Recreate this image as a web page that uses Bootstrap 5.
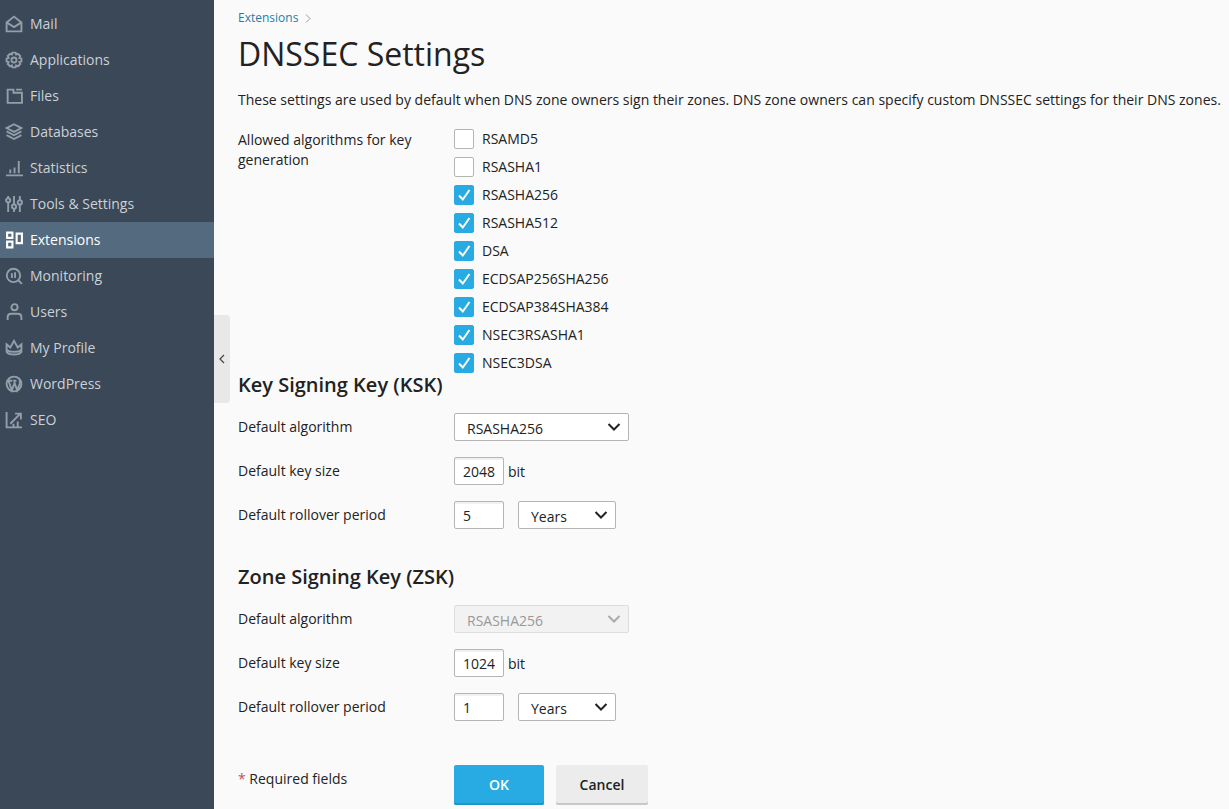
<!DOCTYPE html>
<html lang="en">
<head>
<meta charset="utf-8">
<title>DNSSEC Settings</title>
<link href="https://cdn.jsdelivr.net/npm/bootstrap@5.3.0/dist/css/bootstrap.min.css" rel="stylesheet">
<style>
html,body{height:100%;}
body{font-family:"Open Sans",sans-serif;font-size:14px;line-height:20px;color:#222;background:#fafafa;overflow:hidden;}
.shell{height:809px;}
.side{width:214px;flex:none;background:#3a4858;padding-top:6px;}
.side-link{height:36px;color:#ccd1d7;font-size:14px;padding-left:5px;gap:7px;text-decoration:none;}
.side-link svg{width:18px;height:18px;flex:none;fill:none;stroke:#949ea9;stroke-width:1.8;}
.side-link.current{background:#536a7f;color:#fff;}
.side-link.current svg{stroke:#fff;stroke-width:2;}
.collapse-tab{position:absolute;left:214px;top:315px;width:16px;height:88px;background:#e8e8e8;border-radius:0 4px 4px 0;}
.collapse-tab svg{width:6px;height:10px;fill:none;stroke:#444;stroke-width:1.2;}
.main{padding:7px 0 0 24px;min-width:0;position:relative;}
.crumb{font-size:12px;line-height:18px;color:#1f7ea6;gap:7px;text-decoration:none;}
.crumb svg{width:6px;height:9px;fill:none;stroke:#999;stroke-width:1;}
.page-head{font-size:32px;line-height:40px;font-weight:400;color:#222;margin:7px 0 0;}
.intro{margin:16px 0 0;line-height:20px;height:20px;white-space:nowrap;letter-spacing:.007px;}
.lbl{width:216px;flex:none;}
.algos{margin-top:15px;}
.algos .lbl{width:190px;margin-right:26px;padding-top:5px;}
.chk{height:28px;gap:8px;margin:0;}
.chk input.form-check-input{margin:0;width:20px;height:20px;border:1px solid #b5b5b5;border-radius:2px;background-color:#fff;flex:none;float:none;}
.chk input.form-check-input:checked{background-color:#28abe2;border-color:#28abe2;
background-size:20px 20px;
background-image:url("data:image/svg+xml,%3csvg xmlns='http://www.w3.org/2000/svg' viewBox='0 0 20 20'%3e%3cpath fill='none' stroke='%23fff' stroke-width='2' d='M5 10.500L8.800 14.500 15.500 5'/%3e%3c/svg%3e");}
.chk label{margin-left:0;}
.sect{font-size:20px;line-height:24px;font-weight:600;color:#222;margin:0;}
.sect-first{margin-top:-4px;}
.sect-next{margin-top:36px;}
.frow{align-items:flex-start;margin-top:16px;}
.frow .lbl{padding-top:4px;}
.fld{height:28px;border:1px solid #b5b5b5;border-radius:2px;font-size:14px;line-height:20px;color:#222;padding:3px 8px 3px 8px;background-color:#fff;box-shadow:inset 0 2px 0 #f1f1f1;}
.fld:focus{box-shadow:none;}
.num{width:50px;}
.sel{padding:5px 30px 1px 12px;background-position:right 6px center;background-size:16px 12px;box-shadow:none;
background-image:url("data:image/svg+xml,%3csvg xmlns='http://www.w3.org/2000/svg' viewBox='0 0 16 12'%3e%3cpath fill='none' stroke='%23222' stroke-width='2' d='M2.500 3l5.500 5.500L13.500 3'/%3e%3c/svg%3e");}
.sel-wide{width:175px;}
.sel-unit{width:98px;margin-left:14px;}
.sel:disabled{background-color:#f2f2f2;color:#999;border-color:#ddd;opacity:1;
background-image:url("data:image/svg+xml,%3csvg xmlns='http://www.w3.org/2000/svg' viewBox='0 0 16 12'%3e%3cpath fill='none' stroke='%23aaa' stroke-width='2' d='M2.500 3l5.500 5.500L13.500 3'/%3e%3c/svg%3e");}
.unit{margin-left:4px;padding-top:5px;}
.star{color:#c0505a;}
.footer-row{margin-top:44px;}
.footer-row .lbl{padding-top:4px;}
.btn-ok,.btn-no{height:40px;font-size:14px;line-height:20px;border:0;border-radius:2px;padding:0;}
.btn-ok{width:90px;background:#28abe2;color:#fff;font-weight:600;box-shadow:inset 0 -2px 0 #1f96c8;}
.btn-no{width:92px;margin-left:12px;background:#ececec;color:#222;font-weight:600;box-shadow:inset 0 -2px 0 #c8c8c8;}
</style>
</head>
<body>
<div class="shell d-flex position-relative">
<nav class="side d-flex flex-column">
<a class="side-link d-flex align-items-center" href="#"><svg viewBox="0 0 17 17"><path d="M1.500 7L8.500 1.500 15.500 7v8.500h-14z"/><path d="M1.500 7l7 4.500 7-4.500"/></svg>Mail</a>
<a class="side-link d-flex align-items-center" href="#"><svg viewBox="0 0 17 17"><path d="M7 1.500h3l.5 1.800 1.800-.7 2.100 2.100-.8 1.800 1.900.6v2.800l-1.900.6.8 1.800-2.100 2.100-1.800-.8-.5 1.900H7l-.5-1.900-1.800.8-2.100-2.100.8-1.800-1.900-.6V7.100L3.400 6.500l-.8-1.800 2.100-2.100 1.800.7z"/><circle cx="8.500" cy="8.500" r="2.400"/></svg>Applications</a>
<a class="side-link d-flex align-items-center" href="#"><svg viewBox="0 0 17 17"><path d="M2.500 2.500V15H16V5.500H8V2.500zM10.500 2.500H16"/></svg>Files</a>
<a class="side-link d-flex align-items-center" href="#"><svg viewBox="0 0 17 17"><path d="M8.500 1.200L15.500 4.800 8.500 8.400 1.500 4.800zM1.500 8l7 3.600 7-3.600M1.500 11.500l7 3.600 7-3.600"/></svg>Databases</a>
<a class="side-link d-flex align-items-center" href="#"><svg viewBox="0 0 17 17"><path d="M1 15.500h16M5 13.500V10M9 13.500V8M13 13.500V2"/></svg>Statistics</a>
<a class="side-link d-flex align-items-center" href="#"><svg viewBox="0 0 17 17"><path d="M3 1v2M3 7v9M8.500 1v8M8.500 13v3M14 1v4M14 9v7"/><circle cx="3" cy="5" r="2"/><circle cx="8.500" cy="11" r="2"/><circle cx="14" cy="7" r="2"/></svg>Tools &amp; Settings</a>
<a class="side-link current d-flex align-items-center" href="#"><svg viewBox="0 0 17 17"><path d="M2 1.500h5v5H2zM2 10h5v5.500H2zM11 2.500h5v9h-5z"/></svg>Extensions</a>
<a class="side-link d-flex align-items-center" href="#"><svg viewBox="0 0 17 17"><circle cx="8" cy="8" r="6.300"/><path d="M12.500 12.500L16 16M6.500 6v4.500M9.500 5v5.500"/></svg>Monitoring</a>
<a class="side-link d-flex align-items-center" href="#"><svg viewBox="0 0 17 17"><circle cx="9" cy="4" r="2.900"/><path d="M2.500 16v-2.500c0-2 1.500-3.300 3.500-3.300h6c2 0 3.500 1.300 3.500 3.300V16"/></svg>Users</a>
<a class="side-link d-flex align-items-center" href="#"><svg viewBox="0 0 17 17"><path d="M1.500 5L5 8 8.500 1.800 12 8l3.500-3v7c-2 3.500-12 3.500-14 0z"/><path d="M1.500 10.500c3 2.200 11 2.200 14 0"/></svg>My Profile</a>
<a class="side-link d-flex align-items-center" href="#"><svg viewBox="0 0 17 17"><circle cx="8.500" cy="8.500" r="7"/><path d="M3.500 6l3 8.500L9 7.500l2.500 7L14 8c.5-1.500-.5-2.500-1-2.500M2.800 5.500h4.200M7.800 5.500h3"/></svg>WordPress</a>
<a class="side-link d-flex align-items-center" href="#"><svg viewBox="0 0 17 17"><path d="M1.500 1v14.500H16M5 12l9-9M9.500 2.500H15V8M8 15v-3M12 15v-5"/></svg>SEO</a>
</nav>
<a class="collapse-tab d-flex align-items-center justify-content-center" href="#" aria-label="Collapse"><svg viewBox="0 0 6 10"><path d="M5 1L1 5l4 4"/></svg></a>
<main class="main flex-grow-1">
<a class="crumb d-inline-flex align-items-center" href="#">Extensions<svg viewBox="0 0 6 9"><path d="M1 .5l4 4-4 4"/></svg></a>
<h1 class="page-head">DNSSEC Settings</h1>
<p class="intro">These settings are used by default when DNS zone owners sign their zones. DNS zone owners can specify custom DNSSEC settings for their DNS zones.</p>
<form>
<div class="algos d-flex">
<div class="lbl">Allowed algorithms for key generation</div>
<div>
<div class="form-check chk d-flex align-items-center p-0"><input class="form-check-input" type="checkbox" id="a1"><label class="form-check-label" for="a1">RSAMD5</label></div>
<div class="form-check chk d-flex align-items-center p-0"><input class="form-check-input" type="checkbox" id="a2"><label class="form-check-label" for="a2">RSASHA1</label></div>
<div class="form-check chk d-flex align-items-center p-0"><input class="form-check-input" type="checkbox" id="a3" checked><label class="form-check-label" for="a3">RSASHA256</label></div>
<div class="form-check chk d-flex align-items-center p-0"><input class="form-check-input" type="checkbox" id="a4" checked><label class="form-check-label" for="a4">RSASHA512</label></div>
<div class="form-check chk d-flex align-items-center p-0"><input class="form-check-input" type="checkbox" id="a5" checked><label class="form-check-label" for="a5">DSA</label></div>
<div class="form-check chk d-flex align-items-center p-0"><input class="form-check-input" type="checkbox" id="a6" checked><label class="form-check-label" for="a6">ECDSAP256SHA256</label></div>
<div class="form-check chk d-flex align-items-center p-0"><input class="form-check-input" type="checkbox" id="a7" checked><label class="form-check-label" for="a7">ECDSAP384SHA384</label></div>
<div class="form-check chk d-flex align-items-center p-0"><input class="form-check-input" type="checkbox" id="a8" checked><label class="form-check-label" for="a8">NSEC3RSASHA1</label></div>
<div class="form-check chk d-flex align-items-center p-0"><input class="form-check-input" type="checkbox" id="a9" checked><label class="form-check-label" for="a9">NSEC3DSA</label></div>
</div>
</div>
<h2 class="sect sect-first">Key Signing Key (KSK)</h2>
<div class="d-flex frow"><div class="lbl">Default algorithm</div><select class="form-select fld sel sel-wide"><option>RSASHA256</option></select></div>
<div class="d-flex frow"><div class="lbl">Default key size</div><input class="form-control fld num" value="2048"><span class="unit">bit</span></div>
<div class="d-flex frow"><div class="lbl">Default rollover period</div><input class="form-control fld num" value="5"><select class="form-select fld sel sel-unit"><option>Years</option></select></div>
<h2 class="sect sect-next">Zone Signing Key (ZSK)</h2>
<div class="d-flex frow"><div class="lbl">Default algorithm</div><select class="form-select fld sel sel-wide" disabled><option>RSASHA256</option></select></div>
<div class="d-flex frow"><div class="lbl">Default key size</div><input class="form-control fld num" value="1024"><span class="unit">bit</span></div>
<div class="d-flex frow"><div class="lbl">Default rollover period</div><input class="form-control fld num" value="1"><select class="form-select fld sel sel-unit"><option>Years</option></select></div>
<div class="d-flex footer-row"><div class="lbl"><span class="star">*</span> Required fields</div><button type="button" class="btn btn-ok">OK</button><button type="button" class="btn btn-no">Cancel</button></div>
</form>
</main>
</div>
<script src="https://cdn.jsdelivr.net/npm/bootstrap@5.3.0/dist/js/bootstrap.bundle.min.js"></script>
</body>
</html>
